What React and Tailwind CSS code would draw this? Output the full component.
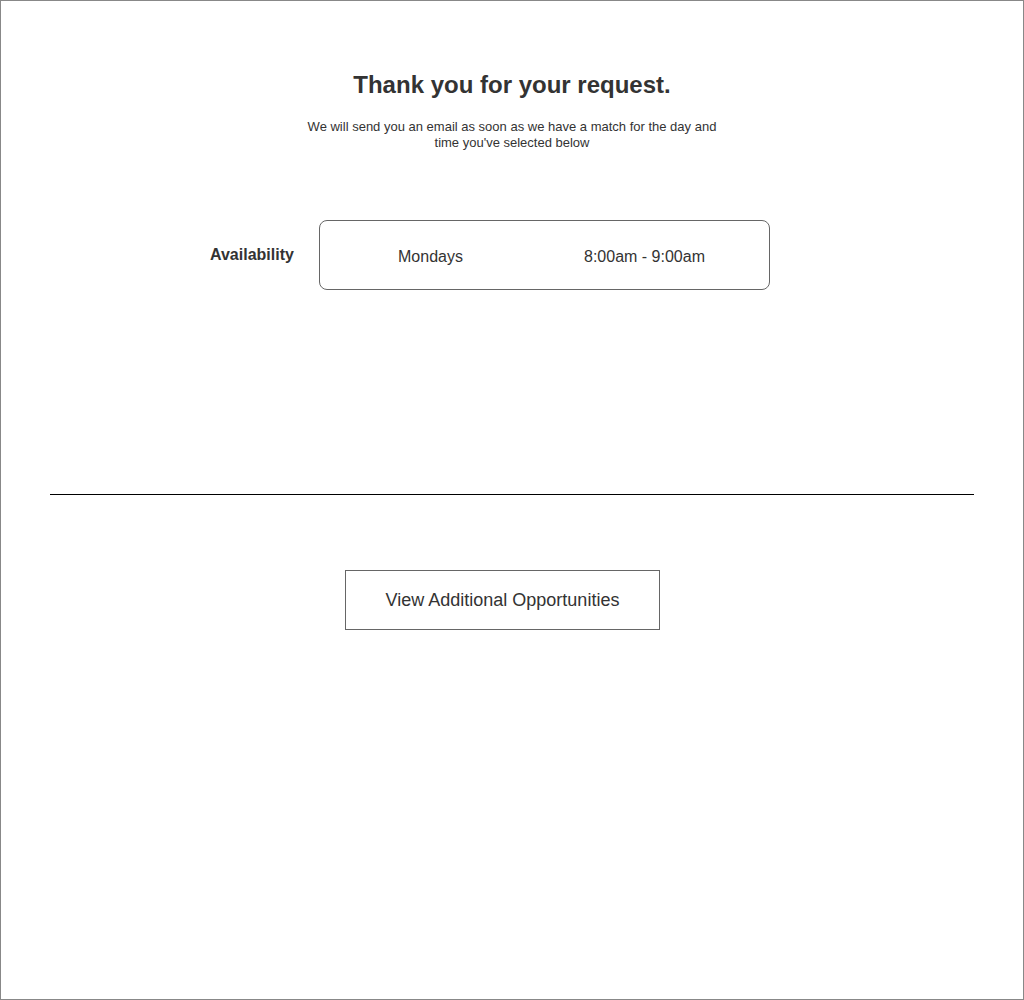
export default function App() {
  return (
    <div className="w-[1024px] h-[1000px] bg-white border border-[#888] flex flex-col text-[#333] font-['Liberation_Sans',Arial,sans-serif]">
      <h1 className="mt-[70px] text-center text-[24px] leading-[28px] font-bold">Thank you for your request.</h1>
      <p className="mt-[20px] mx-auto w-[420px] text-center text-[13px] leading-[16px]">
        We will send you an email as soon as we have a match for the day and time you've selected below
      </p>
      <div className="mt-[69px] flex items-center pl-[209px]">
        <span className="w-[109px] text-[16px] font-bold leading-[20px]">Availability</span>
        <div className="w-[451px] h-[70px] rounded-[8px] border border-[#666] flex items-center pl-[78px] pt-[3px] text-[16px]">
          <span className="w-[186px]">Mondays</span>
          <span>8:00am - 9:00am</span>
        </div>
      </div>
      <div className="mt-[204px] mx-[49px] h-px bg-black"></div>
      <div className="mt-[75px] ml-[344px] w-[315px] h-[60px] border border-[#666] flex items-center justify-center text-[18px]">
        View Additional Opportunities
      </div>
    </div>
  );
}
